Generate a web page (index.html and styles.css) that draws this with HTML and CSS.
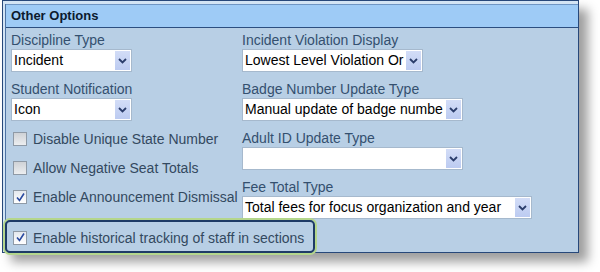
FILE: index.html
```html
<!DOCTYPE html>
<html lang="en">
  <head>
    <meta charset="UTF-8" />
    <meta name="viewport" content="width=device-width, initial-scale=1.0" />
    <title>Other Options</title>
    <link rel="stylesheet" href="styles.css">
  </head>
  <body>
    <div class="panel">
      <div class="panel-inner">
        <div class="panel-header">Other Options</div>
        <div class="panel-body">
          <div class="columns">
            <div class="col col-left">
              <div class="field">
                <div class="label">Discipline Type</div>
                <div class="select w121"><span class="value">Incident</span><span class="arrow"><svg width="9" height="6" viewBox="0 0 9 6"><path d="M1 1 L4.5 4.5 L8 1" fill="none" stroke="#2b3d6b" stroke-width="1.8"/></svg></span></div>
              </div>
              <div class="field">
                <div class="label">Student Notification</div>
                <div class="select w121"><span class="value">Icon</span><span class="arrow"><svg width="9" height="6" viewBox="0 0 9 6"><path d="M1 1 L4.5 4.5 L8 1" fill="none" stroke="#2b3d6b" stroke-width="1.8"/></svg></span></div>
              </div>
              <div class="checks">
                <label class="check-row"><span class="box"></span>Disable Unique State Number</label>
                <label class="check-row"><span class="box"></span>Allow Negative Seat Totals</label>
                <label class="check-row"><span class="box checked"><svg width="11" height="11" viewBox="0 0 11 11"><path d="M2 5.5 L4.5 8.5 L9 1.5" fill="none" stroke="#2a4aa0" stroke-width="1.6"/></svg></span>Enable Announcement Dismissal</label>
              </div>
            </div>
            <div class="col col-right">
              <div class="field">
                <div class="label">Incident Violation Display</div>
                <div class="select w181"><span class="value">Lowest Level Violation Or</span><span class="arrow"><svg width="9" height="6" viewBox="0 0 9 6"><path d="M1 1 L4.5 4.5 L8 1" fill="none" stroke="#2b3d6b" stroke-width="1.8"/></svg></span></div>
              </div>
              <div class="field">
                <div class="label">Badge Number Update Type</div>
                <div class="select w221"><span class="value">Manual update of badge numbe</span><span class="arrow"><svg width="9" height="6" viewBox="0 0 9 6"><path d="M1 1 L4.5 4.5 L8 1" fill="none" stroke="#2b3d6b" stroke-width="1.8"/></svg></span></div>
              </div>
              <div class="field">
                <div class="label">Adult ID Update Type</div>
                <div class="select w221"><span class="value"></span><span class="arrow"><svg width="9" height="6" viewBox="0 0 9 6"><path d="M1 1 L4.5 4.5 L8 1" fill="none" stroke="#2b3d6b" stroke-width="1.8"/></svg></span></div>
              </div>
              <div class="field last">
                <div class="label">Fee Total Type</div>
                <div class="select w290"><span class="value">Total fees for focus organization and year</span><span class="arrow"><svg width="9" height="6" viewBox="0 0 9 6"><path d="M1 1 L4.5 4.5 L8 1" fill="none" stroke="#2b3d6b" stroke-width="1.8"/></svg></span></div>
              </div>
            </div>
          </div>
          <div class="highlight">
            <label class="check-row"><span class="box checked"><svg width="11" height="11" viewBox="0 0 11 11"><path d="M2 5.5 L4.5 8.5 L9 1.5" fill="none" stroke="#2a4aa0" stroke-width="1.6"/></svg></span>Enable historical tracking of staff in sections</label>
          </div>
        </div>
      </div>
    </div>
  </body>
</html>
```

FILE: styles.css
```css
html, body {
  height: 272px;
}
body {
  margin: 0;
  background: #ffffff;
  font-family: "Liberation Sans", Arial, sans-serif;
  font-size: 14px;
  overflow: hidden;
}
.panel {
  margin-left: 2px;
  width: 573px;
  height: 248px;
  border: 1px solid #27487a;
  background: #d3e4f4;
  padding: 3px 0 0 2px;
  box-shadow: 9px 9px 10px rgba(0, 0, 0, 0.38);
}
.panel-inner {
  height: 100%;
  border-left: 1px solid #4d72a3;
  display: flex;
  flex-direction: column;
}
.panel-header {
  height: 22px;
  line-height: 22px;
  background: #9ecbf6;
  border-top: 1px solid #6f96c4;
  border-bottom: 1px solid #2c4f80;
  font-size: 13px;
  font-weight: bold;
  color: #0c1a2e;
  padding-left: 5px;
}
.panel-body {
  flex: 1;
  background: #b8cfe5;
  display: flex;
  flex-direction: column;
}
.columns {
  display: flex;
  padding: 5px 0 0 5px;
}
.col-left {
  width: 231px;
}
.field {
  margin-bottom: 10px;
}
.field.last {
  margin-bottom: 0;
}
.label {
  line-height: 15px;
  color: #34506f;
  margin-bottom: 1px;
  white-space: nowrap;
}
.select {
  display: flex;
  height: 21px;
  border: 1px solid #a6b9cd;
  background: #ffffff;
}
.w121 { width: 119px; }
.w181 { width: 179px; }
.w221 { width: 219px; }
.w290 { width: 288px; }
.value {
  flex: 1;
  overflow: hidden;
  white-space: nowrap;
  line-height: 21px;
  padding-left: 2px;
  color: #000000;
}
.arrow {
  width: 15px;
  margin: 1px 1px 1px 2px;
  background: linear-gradient(#d3ddf7, #bccbf1);
  display: flex;
  align-items: center;
  justify-content: center;
}
.checks {
  display: flex;
  flex-direction: column;
  gap: 11px;
  margin-top: -1px;
}
.check-row {
  display: flex;
  align-items: center;
  height: 18px;
  color: #33495f;
  white-space: nowrap;
}
.box {
  width: 12px;
  height: 12px;
  margin: 0 6px 0 2px;
  border: 1px solid #8f9aa6;
  background: linear-gradient(#cfd2d6, #eceef0);
  display: flex;
  align-items: center;
  justify-content: center;
}
.box.checked {
  background: linear-gradient(#e4e8ee, #ffffff);
}
.highlight {
  margin: 1px 0 -1px -1px;
  width: 302px;
  height: 27px;
  border: 2px solid #1e3b66;
  border-radius: 5px;
  box-shadow: 0 0 0 2px #b4d68c;
  display: flex;
  align-items: center;
  padding: 2px 0 0 4px;
}
```
